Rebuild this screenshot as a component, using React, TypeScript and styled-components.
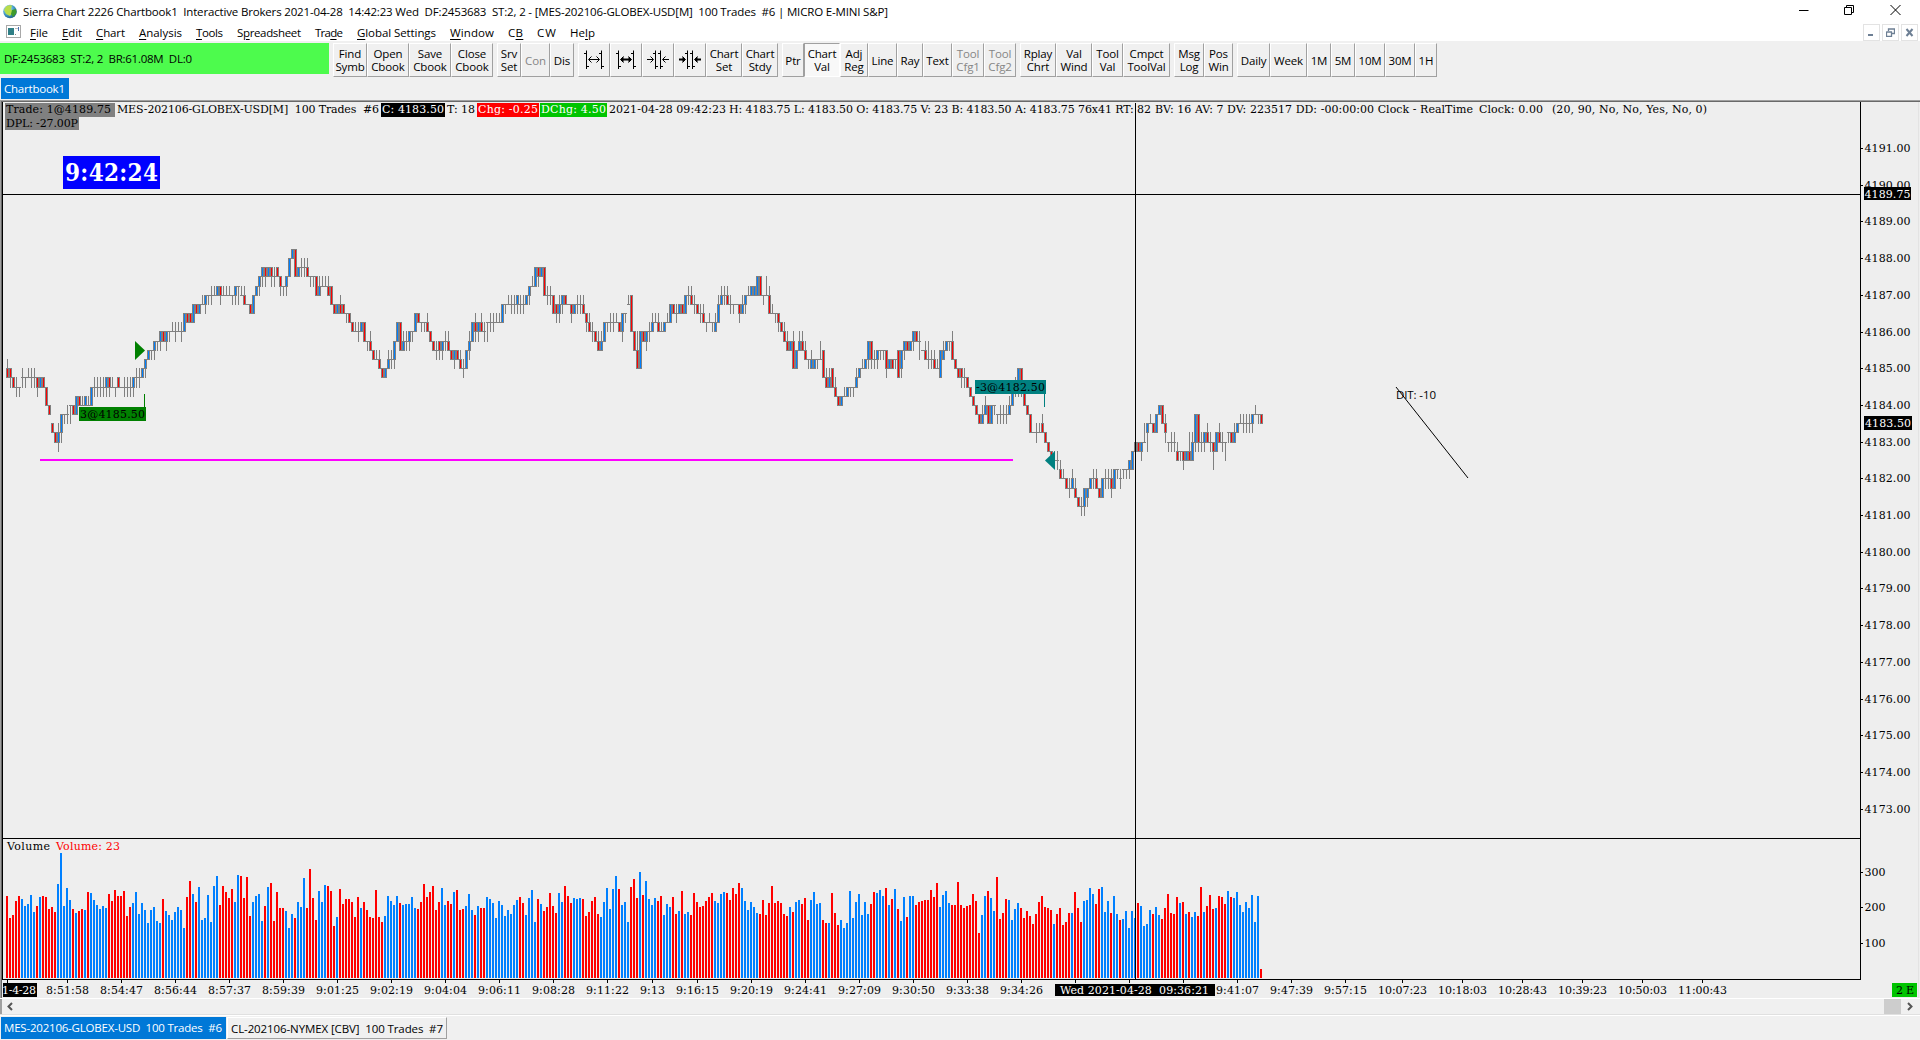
import React, { useLayoutEffect, useRef, useState } from 'react';
import styled, { createGlobalStyle } from 'styled-components';

const UI = `"Open Sans", "Noto Sans", sans-serif`;
const SLAB = `"DejaVu Serif", serif`;

const Global = createGlobalStyle`
  *, *::before, *::after { box-sizing: border-box; }
  html, body { margin: 0; padding: 0; background: #f0f0f0; overflow: hidden; }
`;

/* ---------- text that fills a known width ---------- */

const FitBox = styled.span<{ $w: number }>`
  display: inline-block;
  flex: none;
  width: ${(p) => p.$w}px;
  white-space: pre;
`;

function Fit({ w, children }: { w: number; children: React.ReactNode }) {
  const ref = useRef<HTMLSpanElement>(null);
  const [spacing, setSpacing] = useState(0);
  useLayoutEffect(() => {
    const el = ref.current;
    if (!el) return;
    const natural = el.getBoundingClientRect().width;
    const chars = (el.textContent || '').length;
    setSpacing((w - natural) / Math.max(1, chars - 1));
  }, [w]);
  return (
    <FitBox $w={w}>
      <span ref={ref} style={{ letterSpacing: spacing }}>{children}</span>
    </FitBox>
  );
}

/* ---------- window frame ---------- */

const Window = styled.div`
  display: flex;
  flex-direction: column;
  width: 1920px;
  height: 1040px;
  background: #f0f0f0;
  font-family: ${UI};
  font-size: 11.5px;
  color: #000;
  overflow: hidden;
`;

const TitleBar = styled.header`
  display: flex;
  align-items: center;
  height: 23px;
  padding-left: 3px;
  background: #fff;
`;

const TitleText = styled.div`
  padding-left: 5px;
  line-height: 23px;
  flex: 1;
  white-space: pre;
`;

const CaptionButtons = styled.div`
  display: flex;
  align-items: flex-start;
  height: 100%;
  padding: 4px 2px 0 0;
`;

const CaptionButton = styled.span`
  display: flex;
  justify-content: center;
  width: 46px;
`;

const MenuBar = styled.nav`
  display: flex;
  align-items: center;
  height: 18px;
  padding-left: 6px;
  background: #fff;
`;

const MenuItems = styled.div`
  display: flex;
  flex: 1;
  gap: 14px;
  padding-left: 8px;
  line-height: 18px;
  padding-top: 1px;
`;

const Mnemonic = styled.u`
  text-underline-offset: 2px;
`;

const MdiButtons = styled.div`
  display: flex;
  gap: 2px;
  padding: 1px 2px 0 0;
  height: 100%;
`;

const MdiButton = styled.span`
  display: flex;
  align-items: center;
  justify-content: center;
  width: 17px;
  height: 17px;
  border: 1px solid #e3e3e3;
`;

/* ---------- toolbar ---------- */

const Toolbar = styled.div`
  display: flex;
  height: 37px;
  padding-top: 2px;
  gap: 3px;
`;

const StatusCell = styled.div`
  width: 329px;
  height: 31px;
  padding-left: 4px;
  line-height: 31px;
  background: #4dfb4d;
`;

const ButtonGroup = styled.div`
  display: flex;
  height: 34px;
  padding-left: 1px;
`;

const ToolButton = styled.button<{ $w: number; $on?: boolean; $dim?: boolean }>`
  display: flex;
  align-items: center;
  justify-content: center;
  width: ${(p) => p.$w}px;
  height: 34px;
  margin: 0;
  padding: 0;
  border: 0 solid;
  border-width: 1px;
  border-color: ${(p) => (p.$on ? '#a0a0a0 #fff #fff #a0a0a0' : '#fff #a0a0a0 #a0a0a0 #fff')};
  background: ${(p) => (p.$on ? '#f8f8f8' : '#f0f0f0')};
  color: ${(p) => (p.$dim ? '#868686' : '#000')};
  font: 11.5px/13px ${UI};
  letter-spacing: -0.15px;
  text-align: center;
  white-space: pre;
`;

const BookRow = styled.div`
  display: flex;
  height: 22px;
  padding-left: 1px;
`;

const BookTab = styled.div`
  width: 68px;
  height: 21px;
  padding-left: 3px;
  line-height: 22px;
  background: #0078d7;
  color: #fff;
`;

/* ---------- chart ---------- */

const ChartPane = styled.main`
  position: relative;
  height: 898px;
  background: #eee;
  font-family: ${SLAB};
`;

const Plot = styled.svg`
  display: block;
  font-family: ${SLAB};
  font-size: 11px;
`;

const Legend = styled.div`
  position: absolute;
  left: 5px;
  top: 3px;
  font-size: 11px;
  line-height: 13px;
`;

const LegendRow = styled.div`
  display: flex;
  height: 13.5px;
`;

const Tag = styled.span<{ $w: number; $bg?: string; $fg?: string; $gap?: number }>`
  display: block;
  flex: none;
  width: ${(p) => p.$w}px;
  margin-right: ${(p) => p.$gap ?? 0}px;
  padding-left: 1px;
  background: ${(p) => p.$bg ?? 'transparent'};
  color: ${(p) => p.$fg ?? '#000'};
  white-space: pre;
`;

const ClockBadge = styled.div`
  position: absolute;
  left: 63px;
  top: 56px;
  width: 97px;
  height: 33px;
  padding-left: 2px;
  background: #00f;
  color: #fff;
  font: bold 24px/33px "DejaVu Serif Condensed", ${SLAB};
`;

/* ---------- bottom ---------- */

const ScrollBar = styled.div`
  display: flex;
  align-items: center;
  justify-content: space-between;
  height: 18px;
  padding: 0 5px 1px 6px;
  border-top: 1px solid #fff;
  border-bottom: 1px solid #fff;
  box-shadow: inset 0 -1px 0 #e0e0e0, inset 2px 0 0 #a0a0a0;
`;

const ThumbEnd = styled.div`
  display: flex;
  align-items: center;
  gap: 4px;
`;

const Thumb = styled.div`
  width: 17px;
  height: 15px;
  background: #cdcdcd;
`;

const SheetTabs = styled.footer`
  display: flex;
  height: 24px;
  padding: 1px 0 0 1px;
  gap: 1px;
`;

const SheetTab = styled.div<{ $active?: boolean; $w: number }>`
  width: ${(p) => p.$w}px;
  height: 22px;
  padding-left: 3px;
  line-height: 22px;
  border-style: solid;
  border-width: ${(p) => (p.$active ? '0' : '1px')};
  border-color: #fff #a0a0a0 #a0a0a0 #fff;
  background: ${(p) => (p.$active ? '#0078d7' : '#f0f0f0')};
  color: ${(p) => (p.$active ? '#fff' : '#000')};
`;

/* ---------- data ---------- */

// Open, high, low, close per bar, as quarter points below 4188.25 in base 36.
const BARS = `
dcee ddfe eeff fegf ffgf edfe eefe edee edfe edfe eegf fefe eeff ffhh hhii jjkk kkll ljmk kili iiji
ihji hhjh hhii igig gghh hghh hghg hghh hfhf fegf fegf fegf fegf fege eegf feff ffgf eeff ffff fegf
fegf fegf fege edfe edfe eded dcec cbcb bbcb baca aaba a9b9 99aa a9b9 99a9 9899 98a9 9899 98a9 9797
7788 7788 8686 6677 7676 6566 6575 5565 5465 5455 5454 4465 5455 5455 5455 5565 5464 4464 5455 5466
6666 6677 7575 5454 4353 3242 2243 3232 2243 3243 2233 3354 4454 4353 3131 1010 0033 3232 2132 2132
2133 3343 3343 3355 5354 4344 4344 4355 4466 6677 7676 6577 6677 7787 7788 8899 9899 98a9 9898 88aa
aaba a9bb bbcc cbcc cbdd ddee eded dbdc cbdc cada a8a8 88bb b9ba a9ba a9b9 99a9 9797 7788 8898 8898
8799 99aa aabb bacb aacb baca a9ba a9bb bbcc cbdb bbcc cbdd dced dbdb b9ca a8a8 87a9 98a8 8799 98a9
88a8 8798 8798 8788 8788 8686 6676 6566 6576 6576 6575 6576 6576 6565 5464 4344 4242 2243 3232 2255
5465 5465 5577 6687 7586 6575 5566 6666 6687 7676 6576 6576 6577 7798 8799 98a9 99aa a9bb b9ba a8a8
8898 8798 8798 8788 8899 97a7 7787 6566 5599 99bb b9dd d9d9 99aa a9b9 98a9 9798 8788 8799 9899 9898
8788 8686 6677 7687 7676 6677 7575 5465 5466 6576 6677 7687 7688 8898 8788 8898 9798 8586 6465 5465
5466 6576 6676 6666 6687 7576 6575 5455 5454 5454 5353 3355 5565 5355 5477 7677 7787 7798 8899 98aa
a9bb baba a9dd dbdb b9ba a9bb bacc ccdc dbdc dcdc ccdc cacc bbee edff fdfe ddff fegg gghh hghg gfgg
gfgf ffgf ffgf fdfe eded dcdd dcdc cada aadc cbdc cbdb bbcb bbcb bbed dcdc ccdd ccdc bbee dbeb baca
aabb baba a9b9 99aa a9ca bbbb bacc cadc cbdc cbdd dcdd ebeb cacb baba aaba a9cc ccdd ddee ddfe edfe
eeff ffgg gghh hhii iijj jhji igih hhjj jhjh hhih iiji ihji ihji ihji igih hfhf fegf fdgd ddgf ffhh
hhii iikk kkkk kjlk kjkk jikk kkll llmm mmnn nmnn nmon onpp popp ppqq qprq qoqp qprr rrss srts sqtq
rqsq qpqp poqp poqq qqrr rprp poqp poqp porq qoqo oopo poqp oopo oopo onpn omom mlml llmm mlnl ljll
kjmj jijj jjkk kiki ihih hhjj jilk llml lkml lkml mlnn mmnm mmon nmnm mknn nknl limi iiml lkml lkmk
kjll lkml llom mkmk kjll lkml llnl kklk kkll ljlk kjkj jijj jikj jikj jikj jiki ihii iiji iijj
`.trim().split(/\s+/);

// Bar heights of the volume study; the letter is the bar direction.
const VOLUMES = `
82r 60r 63r 77r 82r 79b 72b 74b 83b 66b 72r 81b 82r 81r 69r 71r 66r 94b 125b 72b 90b 78b 69r 65b 67r 69r 68b 86r 85b 78b
73b 69b 72b 70b 84r 77r 88r 82r 82r 87r 62r 71r 75b 86b 64b 75b 68b 55b 68b 71b 57b 55b 79r 67b 63b 58b 66b 71b 68b 50b
81r 97r 84b 76r 91b 58b 60b 83b 56b 92b 102b 73r 92r 86r 80r 89r 76b 103b 102r 80r 101r 62r 76b 82b 84b 57b 72r 91b 95r 57r
86r 70r 70r 67b 50b 64b 60r 76b 71b 100b 70r 109r 80r 58r 87b 76b 93b 92r 87r 52r 61b 89r 74r 79r 79r 76r 61r 81r 70b 76r
68r 61r 60r 88r 61r 56r 62b 82b 77b 73b 82b 75r 73b 74b 74b 81b 70b 69r 76r 94r 81r 86r 92r 68r 76r 90b 73b 77r 74r 86b
88r 68r 69r 72b 84b 68b 63r 72b 70r 70r 81b 79b 75b 60b 77b 73b 62b 68b 64b 73b 78b 81r 75r 63b 80b 88b 56b 79r 74b 67r
71r 85r 72r 65r 85b 76b 92r 82r 75r 80b 79b 80b 79r 62r 66r 77r 81r 64r 61b 76b 90b 69b 89b 102b 89r 73b 76b 56b 91r 99r
80r 106b 83r 97b 79b 73b 80b 77r 82r 63b 74b 71b 81r 64r 67b 87r 64b 66b 63r 85r 76r 71r 72r 77r 81r 85r 77b 75b 84b 86b
85r 78r 90r 84r 95r 90b 77b 68b 76b 71b 65b 64r 78r 63r 75r 92r 75r 77r 75r 64r 62r 71b 66r 76b 78b 74r 80r 58r 78b 86b
74b 75b 58r 55r 55b 85r 65r 53r 58b 50b 55b 87b 60b 76b 84b 63b 76b 64b 74r 86r 85b 88b 82b 90r 73b 79r 89b 69r 57b 81b
61r 82b 82b 73r 76r 77r 78r 78r 88r 81r 95r 71b 83b 87b 75b 73r 73r 96r 73r 70r 72r 73r 84r 77r 45r 63b 82b 87r 80b 67b
101r 59r 65r 79r 78b 58b 69b 75b 70r 60r 67r 62r 54r 64r 76r 82r 71r 70r 68r 54b 64r 70r 53r 56r 65r 65b 86r 70r 56r 77b
78b 90b 84b 74r 89r 91b 66b 77b 65r 82b 64b 58r 59b 67b 50b 67b 60b 75r 72b 52b 54b 68b 64r 71b 63b 59r 70r 84r 65r 64r
81r 75b 76r 64b 66r 61b 66b 62r 91r 66b 72r 83r 69r 70b 82r 81r 74r 87b 81r 80b 86b 73b 66b 76b 70b 83b 56b 82b 9r
`.trim().split(/\s+/);

const TIMES: [number, string][] = [
  [67, '8:51:58'], [121, '8:54:47'], [175, '8:56:44'], [229, '8:57:37'], [283, '8:59:39'],
  [337, '9:01:25'], [391, '9:02:19'], [445, '9:04:04'], [499, '9:06:11'], [553, '9:08:28'],
  [607, '9:11:22'], [652, '9:13'], [697, '9:16:15'], [751, '9:20:19'], [805, '9:24:41'],
  [859, '9:27:09'], [913, '9:30:50'], [967, '9:33:38'], [1021, '9:34:26'], [1075, ''],
  [1129, ''], [1183, ''], [1237, '9:41:07'], [1291, '9:47:39'], [1345, '9:57:15'],
  [1402, '10:07:23'], [1462, '10:18:03'], [1522, '10:28:43'], [1582, '10:39:23'],
  [1642, '10:50:03'], [1702, '11:00:43'],
];

const levelY = (level: number) => Math.floor(149.3 + 9.1818 * level);

function Candles() {
  return (
    <g shapeRendering="crispEdges">
      {BARS.map((bar, i) => {
        const [open, high, low, close] = bar.split('').map((c) => levelY(parseInt(c, 36)));
        const x = 7 + 3 * i;
        const top = Math.min(open, close);
        const height = Math.abs(open - close) + 1;
        return (
          <g key={i}>
            <rect x={x} y={high} width={1} height={low - high + 1} fill="#808080" />
            <rect x={x - 1} y={top} width={3} height={height} fill="#808080" />
            {height > 1 && (
              <rect x={x} y={top + 1} width={1} height={height - 2} fill={close < open ? '#0080ff' : '#f00'} />
            )}
          </g>
        );
      })}
    </g>
  );
}

function VolumeBars() {
  return (
    <g shapeRendering="crispEdges">
      {VOLUMES.map((v, i) => {
        const h = parseInt(v, 10);
        return (
          <rect key={i} x={6 + 3 * i} y={878 - h} width={2} height={h} fill={v.endsWith('b') ? '#0080ff' : '#f00'} />
        );
      })}
    </g>
  );
}

function Label({ x, y, w, fill, children }: { x: number; y: number; w: number; fill?: string; children: string }) {
  return <text x={x} y={y} textLength={w} fill={fill} xmlSpace="preserve">{children}</text>;
}

function ChartPlot() {
  const prices = Array.from({ length: 19 }, (_, n) => 4191 - n);
  return (
    <Plot width={1920} height={898} viewBox="0 0 1920 898">
      <g shapeRendering="crispEdges">
        <rect x={0} y={0} width={1920} height={1} fill="#a0a0a0" />
        <rect x={0} y={1} width={1920} height={1} fill="#696969" />
        <rect x={0} y={0} width={1} height={898} fill="#a0a0a0" />
        <rect x={1} y={1} width={1} height={897} fill="#696969" />
        <rect x={2} y={2} width={1} height={878} fill="#000" />
        <rect x={1860} y={2} width={1} height={878} fill="#000" />
        <rect x={2} y={738} width={1859} height={1} fill="#000" />
        <rect x={2} y={879} width={1859} height={1} fill="#000" />
        <rect x={1918} y={2} width={1} height={896} fill="#e3e3e3" />
      </g>

      <Candles />
      <VolumeBars />

      <rect x={40} y={359} width={973} height={2} fill="#f0f" shapeRendering="crispEdges" />
      <path d="M135 241L145 250.5L135 260Z" fill="#008000" />
      <rect x={144} y={294} width={1} height={14} fill="#008000" />
      <rect x={79} y={307} width={67} height={14} fill="#008000" />
      <Label x={80} y={318} w={65}>3@4185.50</Label>
      <path d="M1055 351L1045 360.5L1055 370Z" fill="#008080" />
      <rect x={1044} y={293} width={1} height={14} fill="#008080" />
      <rect x={975} y={280} width={71} height={14} fill="#008080" />
      <Label x={976} y={291} w={69}>-3@4182.50</Label>

      <path d="M1396 287L1468 378" stroke="#000" />
      <text x={1396} y={299} textLength={40} fontFamily={UI} fontSize={11.5}>DIT: -10</text>

      {prices.map((p, n) => {
        const y = Math.floor(48.5 + 36.7 * n);
        return (
          <g key={p}>
            <rect x={1861} y={y} width={2} height={1} fill="#000" />
            <Label x={1864.5} y={y + 4} w={46}>{p.toFixed(2)}</Label>
          </g>
        );
      })}
      {[300, 200, 100].map((v, n) => (
        <g key={v}>
          <rect x={1861} y={[772, 807, 843][n]} width={2} height={1} fill="#000" />
          <Label x={1864.5} y={[776, 811, 847][n]} w={21}>{String(v)}</Label>
        </g>
      ))}
      <rect x={1864} y={87} width={47} height={13} fill="#000" />
      <Label x={1864.5} y={98} w={46} fill="#fff">4189.75</Label>
      <rect x={1864} y={316} width={48} height={14} fill="#000" />
      <Label x={1865} y={327} w={46} fill="#fff">4183.50</Label>

      <Label x={7} y={750} w={43}>Volume</Label>
      <Label x={56} y={750} w={64} fill="#f00">Volume: 23</Label>

      <rect x={7} y={880} width={1} height={3} fill="#000" />
      {TIMES.map(([x, label]) => {
        const w = label.length === 8 ? 49 : label.length === 4 ? 25 : 43;
        return (
          <g key={x}>
            <rect x={x} y={880} width={1} height={3} fill="#000" />
            {label && <Label x={x + 0.5 - w / 2} y={894} w={w}>{label}</Label>}
          </g>
        );
      })}
      <rect x={3} y={883} width={34} height={14} fill="#000" />
      <Label x={2} y={894} w={34} fill="#fff">1-4-28</Label>
      <rect x={1055} y={884} width={160} height={12} fill="#000" />
      <Label x={1060} y={894} w={149} fill="#fff">{'Wed 2021-04-28\u00a0 09:36:21'}</Label>
      <rect x={1892} y={883} width={25} height={14} fill="#00c400" />
      <Label x={1896} y={894} w={18}>2 E</Label>

      <g shapeRendering="crispEdges">
        <rect x={3} y={94} width={1857} height={1} fill="#000" />
        <rect x={1135} y={3} width={1} height={876} fill="#000" />
      </g>
    </Plot>
  );
}

/* ---------- icons ---------- */

const Globe = () => (
  <svg width="15" height="16" viewBox="0 0 15 16">
    <defs>
      <radialGradient id="sea" cx="0.35" cy="0.3" r="0.8">
        <stop offset="0" stopColor="#d9f0fb" />
        <stop offset="0.5" stopColor="#4aa3cf" />
        <stop offset="1" stopColor="#14527c" />
      </radialGradient>
    </defs>
    <circle cx="7" cy="7.5" r="6.8" fill="url(#sea)" />
    <path d="M3 2.5Q6 0.5 9 1.5L8 5L10 8L7 12L3 10L1 6Z" fill="#b9dc4a" />
    <path d="M9 6L13 5L13.5 9L10 13L8 10Z" fill="#3e9a2c" />
  </svg>
);

const DocIcon = () => (
  <svg width="16" height="14" viewBox="0 0 16 14" shapeRendering="crispEdges">
    <rect x="0.5" y="0.5" width="14" height="12" fill="#fff" stroke="#a8a8a8" />
    <rect x="2" y="3" width="6" height="7" fill="#2f7f86" />
    <rect x="9" y="3" width="3" height="1" fill="#bbb" />
    <rect x="9" y="9" width="1" height="1" fill="#888" />
    <rect x="12" y="2" width="1" height="4" fill="#4a6fae" />
  </svg>
);

function SpacingIcon({ inward, bold }: { inward?: boolean; bold?: boolean }) {
  const s = bold ? 2 : 1;
  return (
    <svg width="22" height="20" viewBox="0 0 22 20" fill="none" stroke="#000">
      {inward ? (
        <>
          <path d="M8.5 0.5V19M6 3.5H8.5M13.5 0.5V19M11 3.5H13.5M8.5 16.5H11M13.5 16.5H16" />
          <path d="M0 9.5H6M22 9.5H16" strokeWidth={s} />
          <path d="M3.5 6.5L6.5 9.5L3.5 12.5M18.5 6.5L15.5 9.5L18.5 12.5" fill={bold ? '#000' : 'none'} />
        </>
      ) : (
        <>
          <path d="M3.5 0.5V19M1 3.5H3.5M18.5 0.5V19M16 3.5H18.5M3.5 16.5H6M18.5 16.5H21" />
          <path d="M6 9.5H16" strokeWidth={s} />
          <path d="M8.5 6.5L5.5 9.5L8.5 12.5M13.5 6.5L16.5 9.5L13.5 12.5" fill={bold ? '#000' : 'none'} />
        </>
      )}
    </svg>
  );
}

/* ---------- toolbar content ---------- */

type Tool = { w: number; t: React.ReactNode; on?: boolean; dim?: boolean };

const GROUPS: Tool[][] = [
  [{ w: 34, t: 'Find\nSymb' }, { w: 42, t: 'Open\nCbook' }, { w: 42, t: 'Save\nCbook' }, { w: 42, t: 'Close\nCbook' }],
  [{ w: 24, t: 'Srv\nSet' }, { w: 29, t: 'Con', dim: true }, { w: 24, t: 'Dis' }],
  [
    { w: 32, t: <SpacingIcon /> }, { w: 32, t: <SpacingIcon bold /> },
    { w: 32, t: <SpacingIcon inward /> }, { w: 32, t: <SpacingIcon inward bold /> },
    { w: 36, t: 'Chart\nSet' }, { w: 36, t: 'Chart\nStdy' },
  ],
  [
    { w: 22, t: 'Ptr' }, { w: 36, t: 'Chart\nVal', on: true }, { w: 28, t: 'Adj\nReg' }, { w: 29, t: 'Line' },
    { w: 26, t: 'Ray' }, { w: 29, t: 'Text' }, { w: 32, t: 'Tool\nCfg1', dim: true }, { w: 32, t: 'Tool\nCfg2', dim: true },
  ],
  [{ w: 36, t: 'Rplay\nChrt' }, { w: 36, t: 'Val\nWind' }, { w: 31, t: 'Tool\nVal' }, { w: 47, t: 'Cmpct\nToolVal' }],
  [{ w: 30, t: 'Msg\nLog' }, { w: 29, t: 'Pos\nWin' }],
  [
    { w: 33, t: 'Daily' }, { w: 37, t: 'Week' }, { w: 24, t: '1M' }, { w: 24, t: '5M' },
    { w: 30, t: '10M' }, { w: 30, t: '30M' }, { w: 22, t: '1H' },
  ],
];

// Label, index of the underlined letter, text width.
const MENU: [string, number, number][] = [
  ['File', 0, 18], ['Edit', 0, 20], ['Chart', 0, 29], ['Analysis', 0, 43], ['Tools', 0, 27],
  ['Spreadsheet', 1, 64], ['Trade', 3, 28], ['Global Settings', 0, 79], ['Window', 0, 44],
  ['CB', 1, 15], ['CW', -1, 19], ['Help', 2, 25],
];

export default function App() {
  return (
    <>
      <Global />
      <Window>
        <TitleBar>
          <Globe />
          <TitleText>
            <Fit w={865}>{'Sierra Chart 2226 Chartbook1  Interactive Brokers 2021-04-28  14:42:23 Wed  DF:2453683  ST:2, 2 - [MES-202106-GLOBEX-USD[M]  100 Trades  #6 | MICRO E-MINI S&P]'}</Fit>
          </TitleText>
          <CaptionButtons>
            <CaptionButton>
              <svg width="11" height="12"><path d="M1 6.5H10.5" stroke="#000" /></svg>
            </CaptionButton>
            <CaptionButton>
              <svg width="11" height="12" fill="none" stroke="#000"><path d="M0.5 3.5H7.5V10.5H0.5ZM2.5 3V1.5H9.5V8.5H8" /></svg>
            </CaptionButton>
            <CaptionButton>
              <svg width="11" height="12" stroke="#000"><path d="M0.5 1L10.5 11M10.5 1L0.5 11" /></svg>
            </CaptionButton>
          </CaptionButtons>
        </TitleBar>

        <MenuBar>
          <DocIcon />
          <MenuItems>
            {MENU.map(([label, at, w]) => (
              <Fit key={label} w={w}>
                {at < 0 ? label : <>{label.slice(0, at)}<Mnemonic>{label[at]}</Mnemonic>{label.slice(at + 1)}</>}
              </Fit>
            ))}
          </MenuItems>
          <MdiButtons>
            <MdiButton><svg width="9" height="9"><path d="M1 7H6" stroke="#6d7f94" strokeWidth="2" /></svg></MdiButton>
            <MdiButton>
              <svg width="9" height="9" fill="none" stroke="#6d7f94"><path d="M0.5 4H6M0.5 3.5V8.5H5.5V3.5M2.5 3V1H8.5V5.5H6" strokeWidth="1.3" /></svg>
            </MdiButton>
            <MdiButton><svg width="9" height="9" stroke="#6d7f94" strokeWidth="2"><path d="M1.5 1L7.5 8M7.5 1L1.5 8" /></svg></MdiButton>
          </MdiButtons>
        </MenuBar>

        <Toolbar>
          <StatusCell><Fit w={188}>{'DF:2453683  ST:2, 2  BR:61.08M  DL:0'}</Fit></StatusCell>
          {GROUPS.map((group, g) => (
            <ButtonGroup key={g}>
              {group.map((tool, i) => (
                <ToolButton key={i} $w={tool.w} $on={tool.on} $dim={tool.dim}>{tool.t}</ToolButton>
              ))}
            </ButtonGroup>
          ))}
        </Toolbar>

        <BookRow><BookTab><Fit w={61}>Chartbook1</Fit></BookTab></BookRow>

        <ChartPane>
          <Legend>
            <LegendRow>
              <Tag $w={110} $bg="#808080" $gap={1}><Fit w={105}>Trade: 1@4189.75</Fit></Tag>
              <Tag $w={264} $gap={1}><Fit w={262}>{'MES-202106-GLOBEX-USD[M]  100 Trades  #6'}</Fit></Tag>
              <Tag $w={64} $bg="#000" $fg="#fff" $gap={1}><Fit w={62}>C: 4183.50</Fit></Tag>
              <Tag $w={30} $gap={1}><Fit w={28}>T: 18</Fit></Tag>
              <Tag $w={62} $bg="#f00" $fg="#fff" $gap={1}><Fit w={60}>Chg: -0.25</Fit></Tag>
              <Tag $w={67} $bg="#00c400" $fg="#fff" $gap={1}><Fit w={65}>DChg: 4.50</Fit></Tag>
              <Tag $w={119} $gap={1}><Fit w={117}>2021-04-28 09:42:23</Fit></Tag>
              <Tag $w={425} $gap={1}><Fit w={422}>H: 4183.75 L: 4183.50 O: 4183.75 V: 23 B: 4183.50 A: 4183.75 76x41 RT: 82</Fit></Tag>
              <Tag $w={323} $gap={1}><Fit w={318}>BV: 16 AV: 7 DV: 223517 DD: -00:00:00 Clock - RealTime</Fit></Tag>
              <Tag $w={72} $gap={1}><Fit w={64}>Clock: 0.00</Fit></Tag>
              <Tag $w={157}><Fit w={155}>(20, 90, No, No, Yes, No, 0)</Fit></Tag>
            </LegendRow>
            <LegendRow>
              <Tag $w={74} $bg="#808080"><Fit w={72}>DPL: -27.00P</Fit></Tag>
            </LegendRow>
          </Legend>
          <ClockBadge><Fit w={93}>9:42:24</Fit></ClockBadge>
          <ChartPlot />
        </ChartPane>

        <ScrollBar>
          <svg width="8" height="9" fill="none" stroke="#555" strokeWidth="2"><path d="M6 1L2.5 4.5L6 8" /></svg>
          <ThumbEnd>
            <Thumb />
            <svg width="10" height="9" fill="none" stroke="#555" strokeWidth="2"><path d="M3 1L6.5 4.5L3 8" /></svg>
          </ThumbEnd>
        </ScrollBar>

        <SheetTabs>
          <SheetTab $w={225} $active><Fit w={218}>{'MES-202106-GLOBEX-USD  100 Trades  #6'}</Fit></SheetTab>
          <SheetTab $w={220}><Fit w={212}>{'CL-202106-NYMEX [CBV]  100 Trades  #7'}</Fit></SheetTab>
        </SheetTabs>
      </Window>
    </>
  );
}
